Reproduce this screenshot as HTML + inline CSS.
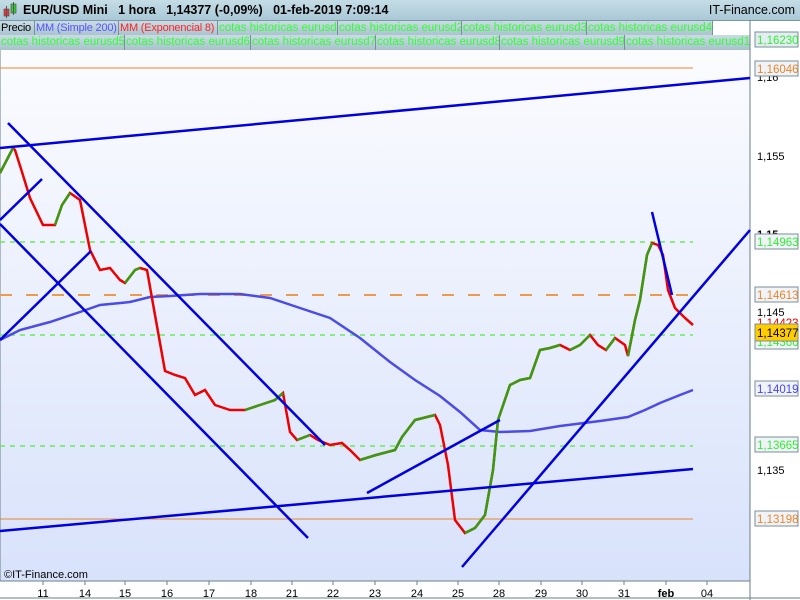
<!DOCTYPE html>
<html><head><meta charset="utf-8"><style>
body{margin:0;width:800px;height:600px;overflow:hidden;font-family:"Liberation Sans",sans-serif;background:#fff}
.hdr{position:absolute;left:0;top:0;width:800px;height:20px;background:linear-gradient(#c5dde6,#a9c8d6);border-bottom:1px solid #7a98a8}
.hdr b{position:absolute;top:3px;font-size:12.5px;color:#000}
.row{position:absolute;left:0;height:15px;display:flex;font-size:11.5px;background:linear-gradient(#c9dce4,#a8c2ce);overflow:hidden}
.row span{box-sizing:border-box;border-right:1px solid #7a8f9a;padding:0 1px;line-height:14px;color:#3f3;white-space:nowrap;overflow:hidden;flex:none}
.row span.s{font-size:11px;letter-spacing:-.2px}
</style></head><body>
<div class="hdr">
<svg style="position:absolute;left:2px;top:2px" width="16" height="16"><rect x="2" y="7" width="5" height="7" fill="#e33" stroke="#555" stroke-width=".7"/><line x1="4.5" y1="4" x2="4.5" y2="16" stroke="#555"/><rect x="9" y="2" width="5" height="9" fill="#3c3" stroke="#555" stroke-width=".7"/><line x1="11.5" y1="0" x2="11.5" y2="13" stroke="#555"/></svg>
<b style="left:23px">EUR/USD Mini &nbsp; 1 hora &nbsp; 1,14377 (-0,09%) &nbsp; 01-feb-2019 7:09:14</b>
<b style="right:5px;font-weight:normal">IT-Finance.com</b></div>
<div class="row" style="top:21px;width:713px"><span class="s" style="color:#000;width:35px">Precio</span><span class="s" style="color:#55f;width:84px">MM (Simple 200)</span><span class="s" style="color:#f22;width:99px">MM (Exponencial 8)</span><span style="width:120px">cotas historicas eurusd</span><span style="width:124px">cotas historicas eurusd2</span><span style="width:125px">cotas historicas eurusd3</span><span style="width:126px">cotas historicas eurusd4</span></div>
<div class="row" style="top:35px;width:750px"><span style="width:125px">cotas historicas eurusd5</span><span style="width:126px">cotas historicas eurusd6</span><span style="width:125px">cotas historicas eurusd7</span><span style="width:124px">cotas historicas eurusd8</span><span style="width:125px">cotas historicas eurusd9</span><span style="width:130px;border:0">cotas historicas eurusd10</span></div>
<svg style="position:absolute;left:0;top:0" width="800" height="600">
<defs><linearGradient id="g" x1="0" y1="0" x2="0" y2="1"><stop offset="0" stop-color="#fbfcff"/><stop offset="1" stop-color="#d8e2fb"/></linearGradient></defs>
<rect x="0" y="50" width="750" height="531" fill="url(#g)"/>
<line x1="750" y1="20" x2="750" y2="600" stroke="#6a7f8a"/>
<line x1="0" y1="581" x2="750" y2="581" stroke="#6a7f8a"/>
<line x1="0" y1="50" x2="0" y2="581" stroke="#6a7f8a"/>
<line x1="0" y1="598" x2="800" y2="598" stroke="#6a7f8a"/>
<line x1="0" y1="68" x2="693" y2="68" stroke="#e8862a"/>
<line x1="0" y1="519" x2="693" y2="519" stroke="#e8862a"/>
<g stroke="#66ee55" stroke-width="1.5" stroke-dasharray="5,5"><line x1="0" y1="242" x2="693" y2="242"/><line x1="0" y1="335" x2="693" y2="335"/><line x1="0" y1="446" x2="693" y2="446"/></g>
<line x1="0" y1="295" x2="693" y2="295" stroke="#ee9a4a" stroke-width="2" stroke-dasharray="12,14"/>
<polyline fill="none" stroke="#4b4be8" stroke-width="2.5" points="0,340 20,330 50,322 80,312 100,305 130,302 150,297 170,296 200,294 240,294 270,298 300,308 330,318 360,338 390,362 415,380 440,396 460,412 480,430 500,432 530,431 560,426 600,421 628,417 645,410 660,403 680,395 693,390"/>
<polyline fill="none" stroke="#e00" stroke-width="2.5" points="0,173 13,148 15,150 22,172 30,198 43,225 55,225 62,205 70,193 80,200 90,250 100,270 110,268 120,280 125,283 135,270 140,268 147,270 155,315 165,371 175,375 185,378 195,395 205,390 215,405 230,410 245,410 260,405 275,400 283,393 290,432 297,440 310,435 318,440 330,445 342,443 350,450 360,460 376,455 395,450 402,437 415,420 435,415 440,425 448,465 455,520 465,533 475,528 485,515 493,470 498,420 510,385 520,380 530,378 540,350 550,348 560,345 570,350 580,345 590,335 598,345 606,350 615,338 625,345 628,356 635,320 640,300 647,255 652,243 658,245 663,255 668,290 675,308 685,318 693,325"/>
<g fill="none" stroke="#3a9a10" stroke-width="2.5"><polyline points="0,173 13,148"/><polyline points="55,225 62,205 70,193"/><polyline points="125,283 135,270 140,268"/><polyline points="245,410 260,405 275,400 283,393"/><polyline points="297,440 310,435"/><polyline points="360,460 376,455 395,450 402,437 415,420 435,415"/><polyline points="465,533 475,528 485,515 493,470 498,420 510,385 520,380 530,378 540,350 550,348 560,345"/><polyline points="570,350 580,345 590,335"/><polyline points="606,350 615,338"/><polyline points="628,356 635,320 640,300 647,255 652,243"/></g>
<g stroke="#0000e0" stroke-width="2.5">
<line x1="0" y1="148" x2="750" y2="78"/>
<line x1="8" y1="123" x2="325" y2="445"/>
<line x1="0" y1="224" x2="308" y2="538"/>
<line x1="0" y1="220" x2="42" y2="179"/>
<line x1="0" y1="340" x2="91" y2="251"/>
<line x1="0" y1="531" x2="693" y2="469"/>
<line x1="367" y1="493" x2="500" y2="420"/>
<line x1="462" y1="567" x2="750" y2="230"/>
<line x1="652" y1="212" x2="672" y2="295"/></g>
<g font-size="11" fill="#000">
<text x="757" y="81">1,16</text><text x="757" y="160">1,155</text><text x="757" y="238" font-weight="bold">1,15</text><text x="757" y="316">1,145</text><text x="757" y="474">1,135</text>
<text x="4" y="578">©IT-Finance.com</text>
<g text-anchor="middle" font-size="11"><text x="43" y="597">11</text><text x="85" y="597">14</text><text x="125" y="597">15</text><text x="167" y="597">16</text><text x="209" y="597">17</text><text x="251" y="597">18</text><text x="292" y="597">21</text><text x="333" y="597">22</text><text x="375" y="597">23</text><text x="417" y="597">24</text><text x="458" y="597">25</text><text x="499" y="597">28</text><text x="541" y="597">29</text><text x="582" y="597">30</text><text x="624" y="597">31</text><text x="666" y="597" font-weight="bold">feb</text><text x="707" y="597">04</text></g>
</g>
<g stroke="#6a7f8a" stroke-width="1"><line x1="43" y1="581" x2="43" y2="585"/><line x1="85" y1="581" x2="85" y2="585"/><line x1="125" y1="581" x2="125" y2="585"/><line x1="167" y1="581" x2="167" y2="585"/><line x1="209" y1="581" x2="209" y2="585"/><line x1="251" y1="581" x2="251" y2="585"/><line x1="292" y1="581" x2="292" y2="585"/><line x1="333" y1="581" x2="333" y2="585"/><line x1="375" y1="581" x2="375" y2="585"/><line x1="417" y1="581" x2="417" y2="585"/><line x1="458" y1="581" x2="458" y2="585"/><line x1="499" y1="581" x2="499" y2="585"/><line x1="541" y1="581" x2="541" y2="585"/><line x1="582" y1="581" x2="582" y2="585"/><line x1="624" y1="581" x2="624" y2="585"/><line x1="666" y1="581" x2="666" y2="585"/><line x1="707" y1="581" x2="707" y2="585"/></g>
<g font-size="11.5" stroke-width="1">
<rect x="755" y="32" width="43" height="15" fill="#e4ecf4" stroke="#7a8f9a"/><text x="757" y="44" fill="#3e3">1,16230</text>
<rect x="755" y="61" width="43" height="15" fill="#f0f4f8" stroke="#7a8f9a"/><text x="757" y="73" fill="#e8862a">1,16046</text>
<rect x="755" y="234" width="43" height="15" fill="#f0f4f8" stroke="#7a8f9a"/><text x="757" y="246" fill="#3e3">1,14963</text>
<rect x="755" y="287" width="43" height="15" fill="#f0f4f8" stroke="#7a8f9a"/><text x="757" y="299" fill="#e8862a">1,14613</text>
<text x="757" y="327" fill="#e00">1,14423</text>
<rect x="755" y="334" width="43" height="15" fill="#f0f4f8" stroke="#7a8f9a"/><text x="757" y="346" fill="#3e3">1,14366</text>
<rect x="755" y="324" width="43" height="17" fill="#ffcc00" stroke="#7a8f9a"/><text x="757" y="337" fill="#000">1,14377</text>
<rect x="755" y="381" width="43" height="15" fill="#f0f4f8" stroke="#7a8f9a"/><text x="757" y="393" fill="#44f">1,14019</text>
<rect x="755" y="437" width="43" height="15" fill="#f0f4f8" stroke="#7a8f9a"/><text x="757" y="449" fill="#3e3">1,13665</text>
<rect x="755" y="511" width="43" height="15" fill="#f0f4f8" stroke="#7a8f9a"/><text x="757" y="523" fill="#e8862a">1,13198</text>
</g>
</svg>
</body></html>
